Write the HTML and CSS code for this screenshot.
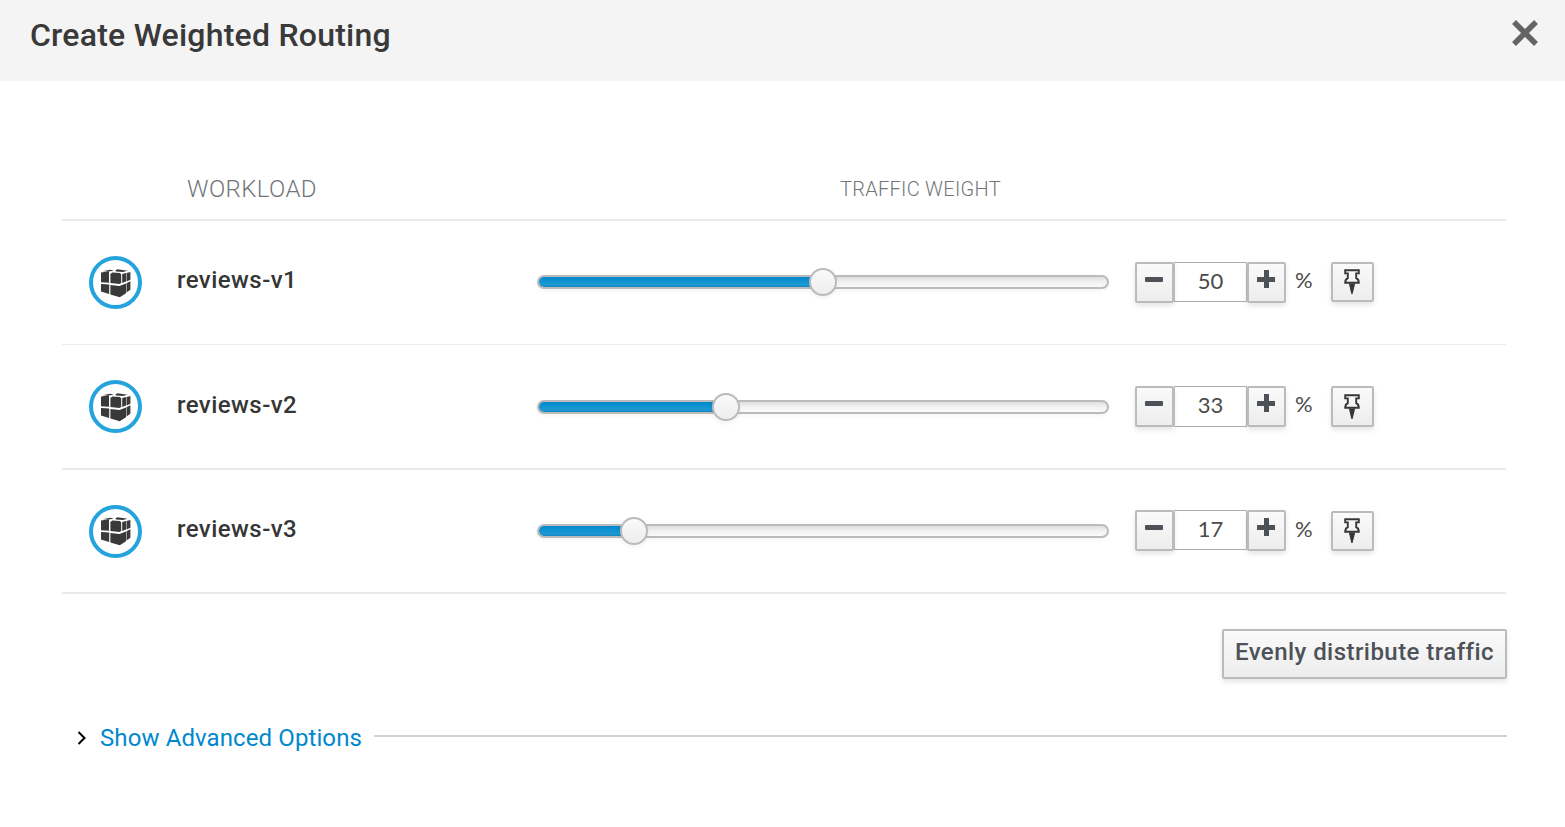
FILE: index.html
```html
<!DOCTYPE html>
<html lang="en">
<head>
<meta charset="utf-8">
<title>Create Weighted Routing</title>
<link rel="stylesheet" href="styles.css">
</head>
<body>
<svg class="defs" width="0" height="0">
  <defs>
    <symbol id="cube" viewBox="0 0 30 29">
      <path d="M0 3.400 8 2.200V13.800L0 13.300zM1.500 2.300 9 .8l4 .6-3.500.8zM9.400 5l2-1.600 7.600.6 1.200 1.500V14l-1.800 1-9-1zM14.500 1.200l2-.9 10 1.500-4.500 1.200-7-.6zM21.200 5l3.800-.9v8.500l-3.800 1.400zM25.500 3.900l3.900-1v7.800l-3.900 1.700zM0 15l8.200.6V25L0 22.600zM9.400 15.900l9.100 1.100 6.500-2.400v9.600L18.800 28.200l-9.400-2.700zM25.500 14.200l3.900-1.900v8.400l-3.900 2.800z"/>
    </symbol>
    <symbol id="pin" viewBox="0 0 16 26">
      <path d="M1.200 1.200h13.600v3.200h-2.600v4.800c1.800.8 2.600 2.300 2.600 4.600H1.200c0-2.300.8-3.800 2.600-4.600V4.400H1.200z" fill="none" stroke="currentColor" stroke-width="1.900"/>
      <path d="M4.800 14.500h6.400L8.600 25H7.400z"/>
    </symbol>
  </defs>
</svg>
<header class="modal-header">
  <h1 class="modal-title">Create Weighted Routing</h1>
  <button class="close" aria-label="Close"><svg width="28" height="28" viewBox="0 0 28 28"><path d="M3 3l22 22M25 3 3 25"/></svg></button>
</header>
<main class="modal-body">
  <section class="table">
    <div class="head"><span class="head-workload">WORKLOAD</span><span class="head-weight">TRAFFIC WEIGHT</span></div>
    <div class="row">
      <span class="badge"><svg width="30" height="29"><use href="#cube"/></svg></span>
      <span class="name">reviews-v1</span>
      <div class="slider"><div class="fill" style="width:50%"></div><span class="handle"></span></div>
      <div class="stepper"><button class="step"><i class="minus"></i></button><span class="value">50</span><button class="step"><i class="plus"></i></button></div>
      <span class="percent">%</span>
      <button class="pin"><svg width="16" height="26"><use href="#pin"/></svg></button>
    </div>
    <div class="row row-thick">
      <span class="badge"><svg width="30" height="29"><use href="#cube"/></svg></span>
      <span class="name">reviews-v2</span>
      <div class="slider"><div class="fill" style="width:32.900%"></div><span class="handle"></span></div>
      <div class="stepper"><button class="step"><i class="minus"></i></button><span class="value">33</span><button class="step"><i class="plus"></i></button></div>
      <span class="percent">%</span>
      <button class="pin"><svg width="16" height="26"><use href="#pin"/></svg></button>
    </div>
    <div class="row row-last">
      <span class="badge"><svg width="30" height="29"><use href="#cube"/></svg></span>
      <span class="name">reviews-v3</span>
      <div class="slider"><div class="fill" style="width:16.700%"></div><span class="handle"></span></div>
      <div class="stepper"><button class="step"><i class="minus"></i></button><span class="value">17</span><button class="step"><i class="plus"></i></button></div>
      <span class="percent">%</span>
      <button class="pin"><svg width="16" height="26"><use href="#pin"/></svg></button>
    </div>
  </section>
  <div class="actions"><button class="distribute">Evenly distribute traffic</button></div>
  <div class="advanced">
    <svg class="chevron" width="10" height="14" viewBox="0 0 10 14"><path d="M1.500 1 7.500 7l-6 6"/></svg>
    <a class="advanced-link">Show Advanced Options</a>
    <span class="rule"></span>
  </div>
</main>
</body>
</html>
```
FILE: styles.css
```css
* { box-sizing: border-box; }
body { margin: 0; background: #fff; color: #363636; font-family: Roboto, "Liberation Sans", sans-serif; }
button { font-family: inherit; padding: 0; margin: 0; }
.defs { display: block; }
.modal-header { height: 81px; padding: 0 26px 0 30px; background: #f4f4f4; display: flex; justify-content: space-between; }
.modal-title { margin: 15px 0 0; font-size: 32px; line-height: 40px; font-weight: 500; letter-spacing: .23px; color: #393939; white-space: nowrap; }
.close { height: 28px; margin-top: 19px; border: 0; background: none; display: flex; }
.close path { stroke: #646464; stroke-width: 5.5; }
.modal-body { padding: 80px 58px 0 62px; }
.table { width: 1444px; }
.head { height: 60px; padding-bottom: 2px; border-bottom: 2px solid #e9e9e9; display: flex; align-items: center; color: #72767b; font-weight: 300; white-space: nowrap; }
.head-workload { width: 653px; padding-left: 125px; font-size: 24px; letter-spacing: .4px; }
.head-weight { padding-left: 125px; font-size: 20px; letter-spacing: .28px; }
.row { height: 124px; border-bottom: 1px solid #ededed; display: flex; align-items: center; padding-left: 27px; }
.row-thick { height: 125px; border-bottom: 2px solid #e9e9e9; }
.row-last { height: 124px; border-bottom: 2px solid #e9e9e9; }
.badge { width: 53px; height: 53px; padding-top: 1px; border: 4px solid #24a3dc; border-radius: 50%; display: flex; align-items: center; justify-content: center; color: #393939; fill: currentColor; }
.name { width: 360px; margin-left: 35px; padding-bottom: 5px; font-size: 24px; font-weight: 500; letter-spacing: .45px; line-height: 30px; }
.slider { width: 572px; height: 14px; margin-bottom: 1px; border: 2px solid #bbb; border-radius: 7px; display: flex; align-items: center; background: linear-gradient(#dedede, #f2f2f2 50%, #fafafa); box-shadow: 0 2px 4px rgba(0,0,0,.04); }
.row-thick .slider { margin-bottom: 0; }
.row-thick .name { padding-bottom: 3px; }
.fill { height: 10px; border-radius: 5px 0 0 5px; background: linear-gradient(#0088ce, #1d99d3 75%, #1687bd); }
.handle { flex: none; width: 28px; height: 28px; margin: 0 -14px; border: 2px solid #bbb; border-radius: 50%; background: linear-gradient(#fafafa, #ededed); box-shadow: 0 2px 4px rgba(0,0,0,.06); }
.stepper { margin-left: 26px; display: flex; align-items: flex-start; }
.row-last .stepper { margin-bottom: 1px; }
.step, .pin, .distribute { border: 2px solid #bbb; border-radius: 2px; background: linear-gradient(#fafafa, #ededed); box-shadow: 0 3px 5px rgba(3,3,3,.1); color: #4d5258; }
.step { width: 39px; height: 41px; padding: 0 1px 7px 0; display: flex; align-items: center; justify-content: center; }
.value { width: 73px; height: 40px; border: 1px solid #bbb; border-top-color: #aaa; border-bottom-color: #aaa; color: #4a4a4a; font: 400 22px/35px Lato, sans-serif; text-align: center; }
.row-thick .value { height: 41px; }
.minus, .plus { width: 18px; height: 5px; border-radius: 1px; background: #4d5258; }
.plus { height: 18px; background: linear-gradient(#4d5258, #4d5258) 0 7px / 18px 5px no-repeat, linear-gradient(#4d5258, #4d5258) 7px 0 / 5px 18px no-repeat; }
.percent { width: 45px; padding: 0 0 5px 9px; color: #4a4a4a; font: 400 22px/26px Lato, sans-serif; }
.pin { width: 43px; height: 40px; margin-bottom: 1px; padding-right: 1px; display: flex; align-items: center; justify-content: center; color: #363636; fill: currentColor; }
.row-thick .pin { height: 41px; margin-bottom: 0; }
.actions { margin-top: 35px; display: flex; justify-content: flex-end; }
.distribute { width: 285px; height: 50px; padding-bottom: 4px; font-size: 24px; font-weight: 500; letter-spacing: .45px; white-space: nowrap; }
.advanced { height: 36px; margin-top: 41px; padding-left: 15px; display: flex; align-items: center; }
.chevron { fill: none; stroke: #000; stroke-width: 2; }
.advanced-link { width: 274px; margin-left: 13px; flex: none; color: #0088ce; font-size: 24px; letter-spacing: .1px; font-weight: 400; white-space: nowrap; }
.rule { flex: 1; height: 2px; margin-top: -4px; background: #d1d1d1; }
```
